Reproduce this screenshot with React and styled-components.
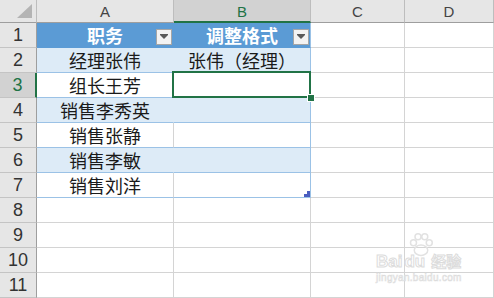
import React from 'react';
import styled, { createGlobalStyle, css } from 'styled-components';

const GlobalStyle = createGlobalStyle`
   html, body {
      margin: 0;
      padding: 0;
      background: #ffffff;
      overflow: hidden;
   }
`;

const GREEN = '#217346';
const GRID = '#d4d4d4';
const TABLE_LINE = '#9bc2e6';

const rows = [
   { a: '职务', b: '调整格式', head: true },
   { a: '经理张伟', b: '张伟（经理）', band: true },
   { a: '组长王芳', b: '', selected: true },
   { a: '销售李秀英', b: '', band: true },
   { a: '销售张静', b: '' },
   { a: '销售李敏', b: '', band: true },
   { a: '销售刘洋', b: '', last: true },
   {},
   {},
   {},
   {},
];

const columns = ['A', 'B', 'C', 'D'];

const App = () => {
   return (
      <>
         <GlobalStyle />
         <Sheet>
            <Corner>
               <CornerTriangle />
            </Corner>
            {columns.map((c) => (
               <ColHead key={c} $active={c === 'B'}>
                  {c}
               </ColHead>
            ))}

            {rows.map((r, i) => {
               const inTable = i < 7;
               return (
                  <React.Fragment key={i}>
                     <RowHead $active={r.selected}>{i + 1}</RowHead>
                     <Cell $table={inTable} $head={r.head} $band={r.band}>
                        {r.a}
                        {r.head && <FilterButton />}
                     </Cell>
                     <Cell
                        $table={inTable}
                        $head={r.head}
                        $band={r.band}
                        $edge={inTable}
                        $selected={r.selected}
                     >
                        {r.b}
                        {r.head && <FilterButton />}
                        {r.selected && <FillHandle />}
                        {r.last && <ResizeHandle />}
                     </Cell>
                     <Cell />
                     <Cell />
                  </React.Fragment>
               );
            })}
         </Sheet>
         <Watermark>
            <Paw viewBox="0 0 40 34">
               <circle cx="10" cy="14" r="4" />
               <circle cx="16" cy="6" r="4" />
               <circle cx="25" cy="6" r="4" />
               <circle cx="31" cy="14" r="4" />
               <ellipse cx="20" cy="24" rx="9" ry="7" />
            </Paw>
            <WatermarkLine>
               <span>Bai</span>
               <span>du</span>
               <span>经验</span>
            </WatermarkLine>
            <WatermarkUrl>jingyan.baidu.com</WatermarkUrl>
         </Watermark>
      </>
   );
};

const FilterButton = () => (
   <Dropdown>
      <svg width="10" height="6" viewBox="0 0 10 6">
         <rect x="1" y="0" width="8" height="1" fill="#5a5a5a" />
         <polygon points="1,1 9,1 5,5" fill="#5a5a5a" />
      </svg>
   </Dropdown>
);

export default App;

const Sheet = styled.div`
   display: grid;
   grid-template-columns: 37px 137px 137px 94px 1fr;
   grid-template-rows: 23px repeat(11, 25px);
   width: 494px;
   height: 298px;
   overflow: hidden;
   font-family: 'Noto Sans CJK SC', 'Noto Sans', sans-serif;
`;

const headerBase = css`
   display: flex;
   align-items: center;
   justify-content: center;
   box-sizing: border-box;
   background: #e6e6e6;
   font-family: 'Liberation Sans', Arial, sans-serif;
   color: #444444;
`;

const Corner = styled.div`
   ${headerBase};
   position: relative;
   border-right: 1px solid #bdbdbd;
   border-bottom: 1px solid #9e9e9e;
`;

const CornerTriangle = styled.div`
   position: absolute;
   right: 4px;
   bottom: 4px;
   width: 0;
   height: 0;
   border-left: 15px solid transparent;
   border-bottom: 14px solid #b4b4b4;
`;

const ColHead = styled.div`
   ${headerBase};
   font-size: 15px;
   padding-top: 1px;
   border-right: 1px solid #bdbdbd;
   border-bottom: 1px solid #9e9e9e;
   ${(p) =>
      p.$active &&
      css`
         background: #d2d2d2;
         color: ${GREEN};
         border-bottom: 2px solid ${GREEN};
      `}
`;

const RowHead = styled.div`
   ${headerBase};
   font-size: 18px;
   color: #333333;
   border-right: 1px solid #9e9e9e;
   border-bottom: 1px solid #c4c4c4;
   ${(p) =>
      p.$active &&
      css`
         background: #d2d2d2;
         color: ${GREEN};
         border-right: 2px solid ${GREEN};
      `}
`;

const Cell = styled.div`
   position: relative;
   display: flex;
   align-items: center;
   justify-content: center;
   box-sizing: border-box;
   font-size: 18px;
   color: #1a1a1a;
   white-space: nowrap;
   background: #ffffff;
   border-right: 1px solid ${GRID};
   border-bottom: 1px solid ${GRID};

   ${(p) =>
      p.$table &&
      css`
         border-bottom-color: ${TABLE_LINE};
      `}

   ${(p) =>
      p.$band &&
      css`
         background: #ddebf7;
         border-right-color: #ddebf7;
      `}

   ${(p) =>
      p.$head &&
      css`
         background: #5b9bd5;
         color: #ffffff;
         font-weight: 700;
         border-right-color: #5b9bd5;
         border-bottom-color: #5b9bd5;
      `}

   ${(p) =>
      p.$edge &&
      css`
         border-right-color: ${TABLE_LINE};
      `}

   ${(p) =>
      p.$selected &&
      css`
         &::after {
            content: '';
            position: absolute;
            top: -2px;
            left: -2px;
            right: -1px;
            bottom: -1px;
            border: 2px solid ${GREEN};
            pointer-events: none;
         }
      `}
`;

const Dropdown = styled.div`
   position: absolute;
   right: 1px;
   bottom: 2px;
   display: flex;
   align-items: center;
   justify-content: center;
   width: 16px;
   height: 16px;
   box-sizing: border-box;
   background: #f3f3f3;
   border: 1px solid #a6a6a6;
`;

const FillHandle = styled.div`
   position: absolute;
   right: -4px;
   bottom: -4px;
   width: 6px;
   height: 6px;
   background: ${GREEN};
   outline: 1px solid #ffffff;
   z-index: 2;
`;

const ResizeHandle = styled.div`
   position: absolute;
   right: 0;
   bottom: 0;
   width: 6px;
   height: 6px;
   background: linear-gradient(
      to bottom,
      transparent 0 3px,
      #4a5ec0 3px 6px
   );

   &::before {
      content: '';
      position: absolute;
      top: 0;
      right: 0;
      width: 3px;
      height: 3px;
      background: #4a5ec0;
   }
`;

const Watermark = styled.div`
   position: absolute;
   left: 376px;
   top: 232px;
   width: 100px;
   color: #e4e4e4;
   pointer-events: none;
`;

const Paw = styled.svg`
   position: absolute;
   left: 30px;
   top: 0;
   width: 30px;
   height: 26px;
   fill: none;
   stroke: #e2e2e2;
   stroke-width: 2;
`;

const WatermarkLine = styled.div`
   display: flex;
   align-items: baseline;
   gap: 2px;
   padding-top: 18px;
   font-family: 'Liberation Sans', Arial, sans-serif;
   font-size: 17px;
   font-weight: 700;
   color: #ffffff;
   -webkit-text-stroke: 1px #dcdcdc;

   span:last-child {
      font-family: 'Noto Sans CJK SC', sans-serif;
      font-size: 15px;
      margin-left: 4px;
   }
`;

const WatermarkUrl = styled.div`
   font-family: 'Liberation Sans', Arial, sans-serif;
   font-size: 10px;
   color: #ffffff;
   -webkit-text-stroke: 0.6px #dcdcdc;
   letter-spacing: 0.3px;
`;
